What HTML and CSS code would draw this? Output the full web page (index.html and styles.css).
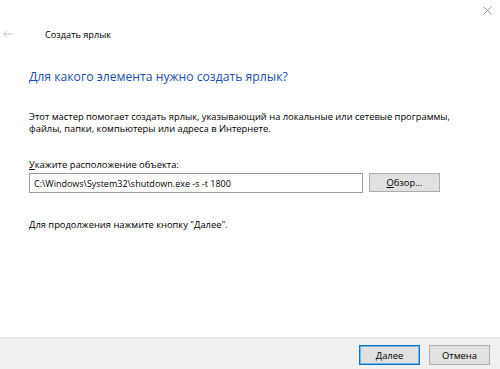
FILE: index.html
```html
<!DOCTYPE html>
<html lang="ru">
<head>
    <meta charset="UTF-8">
    <title>Создать ярлык</title>
    <link rel="stylesheet" href="styles.css">
</head>
<body>
    <div class="window">
        <div class="titlebar">
            <span class="close-btn">
                <svg width="9" height="9" viewBox="0 0 9 9"><path d="M0.5 0.5 L8.5 8.5 M8.5 0.5 L0.5 8.5" stroke="#9a9a9a" stroke-width="1" fill="none"/></svg>
            </span>
        </div>
        <div class="nav">
            <span class="back-btn">
                <svg width="9" height="8" viewBox="0 0 9 8"><path d="M4 0.5 L0.8 4 L4 7.5 M0.8 4 H9" stroke="#c0c0c0" stroke-width="1" fill="none"/></svg>
            </span>
            <span class="nav-title">Создать ярлык</span>
        </div>

        <main class="content">
            <h1 class="main-title">Для какого элемента нужно создать ярлык?</h1>
            <p class="intro">Этот мастер помогает создать ярлык, указывающий на локальные или сетевые программы,<br>файлы, папки, компьютеры или адреса в Интернете.</p>

            <label class="field-label" for="location"><u>У</u>кажите расположение объекта:</label>
            <div class="field-row">
                <input type="text" id="location" class="path-input" value="C:\Windows\System32\shutdown.exe -s -t 1800">
                <button class="btn btn-browse"><u>О</u>бзор...</button>
            </div>

            <p class="hint">Для продолжения нажмите кнопку "Далее".</p>
        </main>

        <footer class="footer">
            <button class="btn btn-default"><u>Д</u>алее</button>
            <button class="btn">Отмена</button>
        </footer>
    </div>
</body>
</html>
```

FILE: styles.css
```css
body {
    margin: 0;
    padding: 0;
    background: #fff;
    font-family: 'Open Sans', 'Noto Sans', sans-serif;
    font-size: 9.35px;
    color: #000;
}

.window {
    width: 500px;
    height: 369px;
    display: flex;
    flex-direction: column;
}

.titlebar {
    height: 20px;
    display: flex;
    justify-content: flex-end;
    align-items: center;
    padding-right: 8px;
}

.close-btn {
    display: flex;
}

.nav {
    height: 28px;
    display: flex;
    align-items: center;
    padding-left: 3px;
}

.back-btn {
    display: flex;
    width: 42px;
}

.nav-title {
    font-size: 9.2px;
}

.content {
    flex: 1;
    padding: 0 29px;
}

.main-title {
    margin: 19px 0 0;
    font-size: 12.2px;
    font-weight: normal;
    line-height: 20px;
    color: #1a4fa8;
}

.intro {
    margin: 24px 0 0;
    line-height: 12px;
    white-space: nowrap;
}

.field-label {
    display: block;
    margin-top: 24px;
    line-height: 12px;
}

.field-row {
    display: flex;
    margin-top: 2px;
}

.path-input {
    box-sizing: border-box;
    width: 334px;
    height: 20px;
    margin: 0;
    padding: 0 4px;
    border: 1px solid #9c9c9c;
    font-family: inherit;
    font-size: 9px;
    color: #000;
    outline: none;
}

.btn {
    box-sizing: border-box;
    height: 20px;
    padding: 0;
    border: 1px solid #adadad;
    background: #e1e1e1;
    font-family: inherit;
    font-size: 9.35px;
    color: #000;
}

.btn-browse {
    width: 71px;
    height: 19px;
    margin-left: 6px;
}

.hint {
    margin: 26px 0 0;
    line-height: 12px;
}

.footer {
    height: 32px;
    box-sizing: border-box;
    border-top: 1px solid #dfdfdf;
    background: #f0f0f0;
    display: flex;
    justify-content: flex-end;
    gap: 9px;
    padding: 7px 10px 0 0;
}

.footer .btn {
    width: 61px;
}

.btn-default {
    border-color: #0078d7;
    box-shadow: inset 0 0 0 1px rgba(0, 120, 215, 0.45);
}
```
